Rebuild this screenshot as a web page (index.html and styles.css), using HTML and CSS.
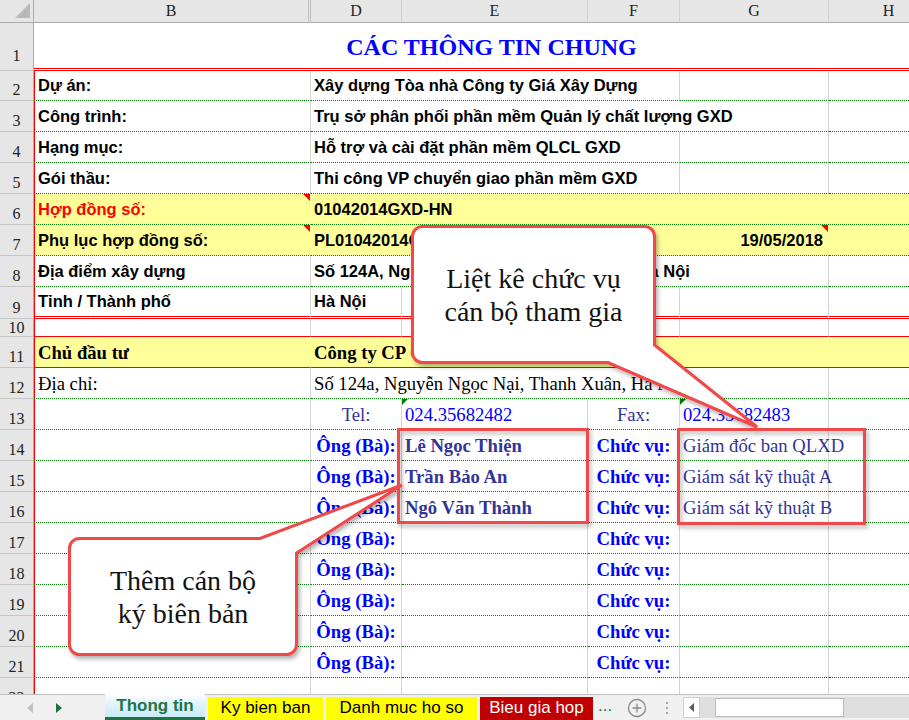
FILE: index.html
```html
<!DOCTYPE html>
<html lang="vi">
<head>
<meta charset="utf-8">
<title>Thong tin</title>
<link rel="stylesheet" href="styles.css">
</head>
<body>
<div class="sheet">
  <div class="row hdr">
    <div class="ch corner"><svg width="33" height="22" viewBox="0 0 33 22"><polygon points="15,18 30,18 30,3" fill="#B9B9B9"/></svg></div>
    <div class="ch chb">B</div>
    <div class="ch">D</div>
    <div class="ch">E</div>
    <div class="ch">F</div>
    <div class="ch">G</div>
    <div class="ch">H</div>
  </div>

  <div class="row r1">
    <div class="rh rh1">1</div>
    <div class="c title">CÁC THÔNG TIN CHUNG</div>
  </div>

  <div class="row rs dot r2">
    <div class="rh">2</div>
    <div class="c b">Dự án:</div>
    <div class="c s3">Xây dựng Tòa nhà Công ty Giá Xây Dựng</div>
    <div class="c"></div><div class="c"></div>
  </div>
  <div class="row rs dot r31">
    <div class="rh">3</div>
    <div class="c b">Công trình:</div>
    <div class="c s4">Trụ sở phân phối phần mềm Quản lý chất lượng GXD</div>
    <div class="c"></div>
  </div>
  <div class="row rs dot r31">
    <div class="rh">4</div>
    <div class="c b">Hạng mục:</div>
    <div class="c s3">Hỗ trợ và cài đặt phần mềm QLCL GXD</div>
    <div class="c"></div><div class="c"></div>
  </div>
  <div class="row rs dot r31">
    <div class="rh">5</div>
    <div class="c b">Gói thầu:</div>
    <div class="c s3">Thi công VP chuyển giao phần mềm GXD</div>
    <div class="c"></div><div class="c"></div>
  </div>
  <div class="row rs dot r31 fill">
    <div class="rh">6</div>
    <div class="c b red note">Hợp đồng số:</div>
    <div class="c s5">01042014GXD-HN</div>
  </div>
  <div class="row rs dot r31 fill">
    <div class="rh">7</div>
    <div class="c b note">Phụ lục hợp đồng số:</div>
    <div class="c s3">PL01042014GXD-HN</div>
    <div class="c right note">19/05/2018</div>
    <div class="c"></div>
  </div>
  <div class="row rs dot r31">
    <div class="rh">8</div>
    <div class="c b">Địa điểm xây dựng</div>
    <div class="c s4">Số 124A, Nguyễn Ngọc Nại, Thanh Xuân, Hà Nội</div>
    <div class="c"></div>
  </div>
  <div class="row rs r9">
    <div class="rh">9</div>
    <div class="c b">Tỉnh / Thành phố</div>
    <div class="c">Hà Nội</div>
    <div class="c"></div><div class="c"></div><div class="c"></div><div class="c"></div>
  </div>
  <div class="row r10">
    <div class="rh rh10">10</div>
    <div class="c b"></div><div class="c"></div><div class="c"></div><div class="c"></div><div class="c"></div><div class="c"></div>
  </div>
  <div class="row rt r11 fill">
    <div class="rh">11</div>
    <div class="c b bold">Chủ đầu tư</div>
    <div class="c s5 bold">Công ty CP Giá Xây Dựng</div>
  </div>
  <div class="row rt dot r31">
    <div class="rh">12</div>
    <div class="c b">Địa chỉ:</div>
    <div class="c s4">Số 124a, Nguyễn Ngọc Nại, Thanh Xuân, Hà Nội</div>
    <div class="c"></div>
  </div>
  <div class="row rt dot r31">
    <div class="rh">13</div>
    <div class="c b"></div>
    <div class="c center indigo">Tel:</div>
    <div class="c blue gnote">024.35682482</div>
    <div class="c center indigo">Fax:</div>
    <div class="c blue gnote">024.35682483</div>
    <div class="c"></div>
  </div>
  <div class="row rt dot r31">
    <div class="rh">14</div>
    <div class="c b"></div>
    <div class="c center blue bold">Ông (Bà):</div>
    <div class="c indigo bold">Lê Ngọc Thiện</div>
    <div class="c center blue bold">Chức vụ:</div>
    <div class="c indigo">Giám đốc ban QLXD</div>
    <div class="c"></div>
  </div>
  <div class="row rt dot r31">
    <div class="rh">15</div>
    <div class="c b"></div>
    <div class="c center blue bold">Ông (Bà):</div>
    <div class="c indigo bold">Trần Bảo An</div>
    <div class="c center blue bold">Chức vụ:</div>
    <div class="c indigo">Giám sát kỹ thuật A</div>
    <div class="c"></div>
  </div>
  <div class="row rt dot r31">
    <div class="rh">16</div>
    <div class="c b"></div>
    <div class="c center blue bold">Ông (Bà):</div>
    <div class="c indigo bold">Ngô Văn Thành</div>
    <div class="c center blue bold">Chức vụ:</div>
    <div class="c indigo">Giám sát kỹ thuật B</div>
    <div class="c"></div>
  </div>
  <div class="row rt dot r31">
    <div class="rh">17</div>
    <div class="c b"></div>
    <div class="c center blue bold">Ông (Bà):</div>
    <div class="c"></div>
    <div class="c center blue bold">Chức vụ:</div>
    <div class="c"></div><div class="c"></div>
  </div>
  <div class="row rt dot r31">
    <div class="rh">18</div>
    <div class="c b"></div>
    <div class="c center blue bold">Ông (Bà):</div>
    <div class="c"></div>
    <div class="c center blue bold">Chức vụ:</div>
    <div class="c"></div><div class="c"></div>
  </div>
  <div class="row rt dot r31">
    <div class="rh">19</div>
    <div class="c b"></div>
    <div class="c center blue bold">Ông (Bà):</div>
    <div class="c"></div>
    <div class="c center blue bold">Chức vụ:</div>
    <div class="c"></div><div class="c"></div>
  </div>
  <div class="row rt dot r31">
    <div class="rh">20</div>
    <div class="c b"></div>
    <div class="c center blue bold">Ông (Bà):</div>
    <div class="c"></div>
    <div class="c center blue bold">Chức vụ:</div>
    <div class="c"></div><div class="c"></div>
  </div>
  <div class="row rt dot r31">
    <div class="rh">21</div>
    <div class="c b"></div>
    <div class="c center blue bold">Ông (Bà):</div>
    <div class="c"></div>
    <div class="c center blue bold">Chức vụ:</div>
    <div class="c"></div><div class="c"></div>
  </div>
  <div class="row rt dot r31">
    <div class="rh">22</div>
    <div class="c b"></div><div class="c"></div><div class="c"></div><div class="c"></div><div class="c"></div><div class="c"></div>
  </div>
</div>

<div class="tabbar">
  <div class="nav">
    <svg class="arrow" width="6" height="10" viewBox="0 0 6 10"><polygon points="6,0 6,10 0,5" fill="#BFBFBF"/></svg>
    <svg class="arrow" width="6" height="10" viewBox="0 0 6 10"><polygon points="0,0 0,10 6,5" fill="#1F6E43"/></svg>
  </div>
  <div class="tabs">
    <div class="tab active">Thong tin</div>
    <div class="tab yellow w115">Ky bien ban</div>
    <div class="tab yellow w151">Danh muc ho so</div>
    <div class="tab darkred w113">Bieu gia hop</div>
  </div>
  <div class="more">...</div>
  <svg class="add" width="20" height="20" viewBox="0 0 20 20"><circle cx="10" cy="10" r="8.5" fill="none" stroke="#8A8A8A" stroke-width="1.3"/><path d="M10 5.5V14.5M5.5 10H14.5" stroke="#8A8A8A" stroke-width="1.3"/></svg>
  <div class="sep"><span></span><span></span><span></span></div>
  <div class="hscroll">
    <div class="sb-btn"><svg width="5" height="9" viewBox="0 0 5 9"><polygon points="5,0 5,9 0,4.5" fill="#606060"/></svg></div>
    <div class="sb-track"><div class="sb-thumb"></div></div>
  </div>
</div>

<svg class="overlay" width="909" height="720" viewBox="0 0 909 720">
  <defs>
    <filter id="sh" x="-20%" y="-20%" width="140%" height="140%">
      <feDropShadow dx="2" dy="3" stdDeviation="2" flood-color="#000" flood-opacity="0.3"/>
    </filter>
  </defs>
  <g class="shape" filter="url(#sh)">
    <rect class="box" x="398.5" y="429.5" width="189" height="93"/>
    <rect class="box" x="678.5" y="429.5" width="186" height="94"/>
    <path class="bubble" d="M422.5 226.5 H644.5 A10 10 0 0 1 654.5 236.5 V345 L757 427 L608 362.5 H422.5 A10 10 0 0 1 412.5 352.5 V236.5 A10 10 0 0 1 422.5 226.5 Z"/>
    <path class="bubble" d="M79.5 538.5 H260 L402 485 L296.5 553 V644.5 A10 10 0 0 1 286.5 654.5 H79.5 A10 10 0 0 1 69.5 644.5 V548.5 A10 10 0 0 1 79.5 538.5 Z"/>
  </g>
</svg>
<div class="ctext ct1">Liệt kê chức vụ<br>cán bộ tham gia</div>
<div class="ctext ct2">Thêm cán bộ<br>ký biên bản</div>
</body>
</html>
```

FILE: styles.css
```css
* { box-sizing: border-box; }
html, body { margin: 0; padding: 0; background: #fff; }
body {
  width: 909px;
  height: 720px;
  overflow: hidden;
  position: relative;
  font-family: "Liberation Sans", Arial, sans-serif;
  color: #000;
}

.sheet { height: 694px; overflow: hidden; }

.row {
  display: grid;
  grid-template-columns: 34px 277px 91px 186px 92px 149px 120px;
}

/* column headers */
.hdr { height: 23px; }
.ch {
  background: #E6E6E6;
  border-bottom: 1px solid #ABABAB;
  border-right: 1px solid #CFCFCF;
  display: flex;
  align-items: center;
  justify-content: center;
  font: 16px "Liberation Serif", "Times New Roman", serif;
  color: #222;
}
.corner { border-right: 1px solid #ABABAB; padding: 0; }
.corner svg { display: block; }
.chb { border-right: 3px double #BEBEBE; }

/* row headers */
.rh {
  background: #E6E6E6;
  border-right: 1px solid #ABABAB;
  border-bottom: 1px solid #C6C6C6;
  display: flex;
  align-items: flex-end;
  justify-content: center;
  padding-bottom: 1px;
  font: 16px "Liberation Serif", "Times New Roman", serif;
  color: #222;
  overflow: hidden;
}
.rh1 { padding-bottom: 5px; }
.rh10 { padding-bottom: 0; line-height: 16px; }

/* cells */
.c {
  border-right: 1px solid #D4D4D4;
  display: flex;
  align-items: flex-end;
  padding: 0 3px 5px 3px;
  white-space: nowrap;
  min-width: 0;
}
.b { border-left: 1px solid #FF0000; }
.s3 { grid-column: span 3; }
.s4 { grid-column: span 4; }
.s5 { grid-column: span 5; }

.rs .c { font: bold 16.5px "Liberation Sans", Arial, sans-serif; padding-bottom: 5px; }
.rt .c { font: 18.67px "Liberation Serif", "Times New Roman", serif; padding-bottom: 3px; }
.rt .c.bold { font-weight: bold; }

.dot .c { border-bottom: 1px dotted #008000; }

.r1 { height: 48px; }
.r1 .rh { border-bottom: 1px solid #C6C6C6; }
.title {
  grid-column: 2 / -1;
  border-right: 0;
  border-bottom: 3px double #FF0000;
  justify-content: center;
  padding-bottom: 7px;
  font: bold 24px "Liberation Serif", "Times New Roman", serif;
  color: #0000FF;
}
.r2 { height: 30px; }
.r31 { height: 31px; }
.r9 { height: 32px; }
.r9 .c { border-bottom: 3px double #FF0000; }
.r10 { height: 18px; }
.r10 .c { border-bottom: 1px solid #FF0000; }
.r11 { height: 31px; }
.r11 .c { border-bottom: 1px solid #FF0000; }

.fill .c { background: #FFFF99; border-right-color: transparent; }

.red { color: #FF0000; }
.blue { color: #0000FF; }
.indigo { color: #333399; }
.center { justify-content: center; }
.right { justify-content: flex-end; padding-right: 5px; }

.note { position: relative; }
.note::after {
  content: "";
  position: absolute;
  top: 0;
  right: 0;
  border-left: 7px solid transparent;
  border-top: 7px solid #FF0000;
}
.gnote { position: relative; }
.gnote::before {
  content: "";
  position: absolute;
  top: 0;
  left: 0;
  border-right: 6px solid transparent;
  border-top: 6px solid #008000;
}

/* sheet tab bar */
.tabbar {
  height: 26px;
  display: flex;
  align-items: stretch;
  background: #F0F0F0;
  border-top: 1px solid #C0C0C0;
}
.nav {
  width: 105px;
  flex: none;
  display: flex;
  align-items: center;
  padding-left: 27px;
  gap: 23px;
}
.arrow { display: block; }
.tabs { display: flex; gap: 3px; flex: none; }
.tab {
  margin-top: 2px;
  display: flex;
  align-items: center;
  justify-content: center;
  font: 17px "Liberation Sans", Arial, sans-serif;
  white-space: nowrap;
  padding-bottom: 2px;
}
.tab.active {
  width: 100px;
  margin-top: -1px;
  background: linear-gradient(#FFFFFF 0%, #E4F5FC 35%, #C9EAF8 100%);
  color: #217346;
  font-weight: bold;
  border-bottom: 3px solid #217346;
  padding-bottom: 0;
}
.yellow { background: #FFFF00; color: #000; }
.darkred { background: #C00000; color: #fff; }
.w115 { width: 115px; }
.w151 { width: 151px; }
.w113 { width: 113px; }
.more {
  margin-left: 5px;
  width: 18px;
  display: flex;
  align-items: center;
  font: 17px "Liberation Sans", Arial, sans-serif;
  color: #1F6E43;
  padding-bottom: 3px;
}
.add { margin: 3px 0 0 11px; flex: none; }
.sep {
  margin-left: 19px;
  width: 3px;
  display: flex;
  flex-direction: column;
  justify-content: center;
  gap: 3px;
}
.sep span { display: block; width: 2px; height: 2px; background: #A8A8A8; }
.hscroll {
  margin: 2px 0 2px 14px;
  flex: 1;
  display: flex;
}
.sb-btn {
  width: 17px;
  flex: none;
  background: #fff;
  border: 1px solid #CFCFCF;
  display: flex;
  align-items: center;
  justify-content: center;
}
.sb-track {
  flex: 1;
  background: #DEDEDE;
  padding: 1px 0 1px 15px;
  display: flex;
}
.sb-thumb {
  width: 129px;
  background: #fff;
  border: 1px solid #BDBDBD;
}

/* overlays: callouts and highlight boxes */
.overlay { position: absolute; left: 0; top: 0; pointer-events: none; }
.shape .box { fill: none; stroke: #EF4848; stroke-width: 3; }
.shape .bubble { fill: #fff; stroke: #EF4848; stroke-width: 3; stroke-linejoin: miter; }

.ctext {
  position: absolute;
  display: flex;
  align-items: center;
  justify-content: center;
  text-align: center;
  font: 28px/33px "Liberation Serif", "Times New Roman", serif;
  color: #111;
}
.ct1 { left: 411px; top: 225px; width: 245px; height: 139px; }
.ct2 { left: 68px; top: 537px; width: 230px; height: 119px; }
```
